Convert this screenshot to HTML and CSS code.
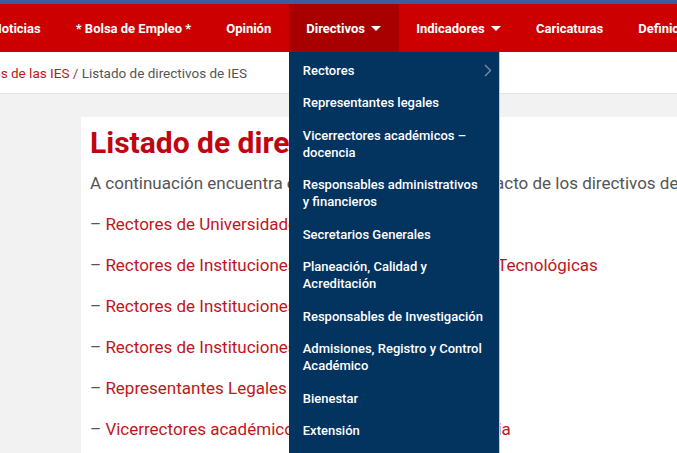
FILE: index.html
```html
<html>
<head>
<meta charset="utf-8">
<link rel="stylesheet" href="styles.css">
</head>
<body class="page">
    <div class="topbar"></div>
    <ul class="nav">
        <li class="nav-item"><a>Noticias</a></li>
        <li class="nav-item"><a>* Bolsa de Empleo *</a></li>
        <li class="nav-item"><a>Opinión</a></li>
        <li class="nav-item nav-active">
            <a>Directivos <span class="caret"></span></a>
            <ul class="dropdown">
                <li class="dropdown-item has-sub">Rectores
                    <svg class="chevron" width="8" height="13" viewBox="0 0 8 13"><path d="M1 1l5.5 5.5L1 12" fill="none" stroke="#7f8fa8" stroke-width="1.3"/></svg>
                </li>
                <li class="dropdown-item">Representantes legales</li>
                <li class="dropdown-item">Vicerrectores académicos – docencia</li>
                <li class="dropdown-item">Responsables administrativos y financieros</li>
                <li class="dropdown-item">Secretarios Generales</li>
                <li class="dropdown-item">Planeación, Calidad y Acreditación</li>
                <li class="dropdown-item">Responsables de Investigación</li>
                <li class="dropdown-item">Admisiones, Registro y Control Académico</li>
                <li class="dropdown-item">Bienestar</li>
                <li class="dropdown-item">Extensión</li>
                <li class="dropdown-item">Internacionalización</li>
            </ul>
        </li>
        <li class="nav-item"><a>Indicadores <span class="caret"></span></a></li>
        <li class="nav-item"><a>Caricaturas</a></li>
        <li class="nav-item"><a>Definiciones</a></li>
    </ul>
    <div class="breadcrumb">
        <span class="crumbs"><a class="crumb-link">Directivos de las IES</a> / Listado de directivos de IES</span>
    </div>
    <div class="main">
        <div class="card">
            <h1 class="title">Listado de directivos de IES</h1>
            <p class="intro">A continuación encuentra el listado con datos de contacto de los directivos de las IES</p>
            <ul class="links">
                <li class="link-row">– <a>Rectores de Universidades</a></li>
                <li class="link-row">– <a>Rectores de Instituciones Universitarias, o Escuelas Tecnológicas</a></li>
                <li class="link-row">– <a>Rectores de Instituciones Tecnológicas</a></li>
                <li class="link-row">– <a>Rectores de Instituciones Técnicas Profesionales</a></li>
                <li class="link-row">– <a>Representantes Legales</a></li>
                <li class="link-row">– <a>Vicerrectores académicos – de docencia universitaria</a></li>
                <li class="link-row">– <a>Responsables administrativos y financieros</a></li>
            </ul>
        </div>
    </div>
</body>
</html>
```

FILE: styles.css
```css
* {
    box-sizing: border-box;
}

.page {
    margin: 0;
    background: #f2f2f2;
    font-family: Roboto, "Liberation Sans", sans-serif;
    overflow: hidden;
    height: 453px;
}

.topbar {
    height: 4px;
    background: #3b5f9e;
}

.nav {
    display: flex;
    margin: 0 0 0 -25px;
    padding: 0;
    list-style: none;
    height: 48px;
    background: #cc0000;
    white-space: nowrap;
}

.nav-item {
    position: relative;
    display: flex;
    align-items: center;
    padding: 0 17.5px;
    color: #fff;
    font-size: 13px;
    font-weight: 700;
}

.nav-active {
    background: #a80000;
}

.caret {
    display: inline-block;
    width: 0;
    height: 0;
    margin-left: 3px;
    vertical-align: 2px;
    border-left: 5px solid transparent;
    border-right: 5px solid transparent;
    border-top: 5px solid #fff;
}

.dropdown {
    position: absolute;
    top: 48px;
    left: 0;
    z-index: 5;
    width: 210px;
    margin: 0;
    padding: 2px 0 0;
    list-style: none;
    background: #03335f;
    box-shadow: 1px 0 0 #b9cde4;
    white-space: normal;
}

.dropdown-item {
    position: relative;
    padding: 7.75px 14px 7.75px 14px;
    font-size: 13px;
    font-weight: 500;
    line-height: 17px;
    color: #fff;
}

.chevron {
    position: absolute;
    right: 7px;
    top: 10px;
}

.breadcrumb {
    height: 42px;
    display: flex;
    align-items: center;
    background: #fff;
    border-bottom: 1px solid #e4e4e4;
    font-size: 13.5px;
    color: #555;
}

.crumbs {
    margin-left: -52px;
}

.crumb-link {
    color: #c0161b;
}

.main {
    padding: 23px 0 0 81px;
}

.card {
    width: 800px;
    height: 400px;
    background: #fff;
    padding: 8px 9px;
}

.title {
    margin: 0;
    font-size: 30px;
    font-weight: 700;
    line-height: 36px;
    color: #c00510;
}

.intro {
    margin: 10px 0 0;
    font-size: 17px;
    line-height: 24px;
    color: #555;
}

.links {
    margin: 17px 0 0;
    padding: 0;
    list-style: none;
}

.link-row {
    font-size: 17px;
    line-height: 24px;
    margin-bottom: 17px;
    color: #555;
}

.link-row a {
    color: #c0161b;
}
```
